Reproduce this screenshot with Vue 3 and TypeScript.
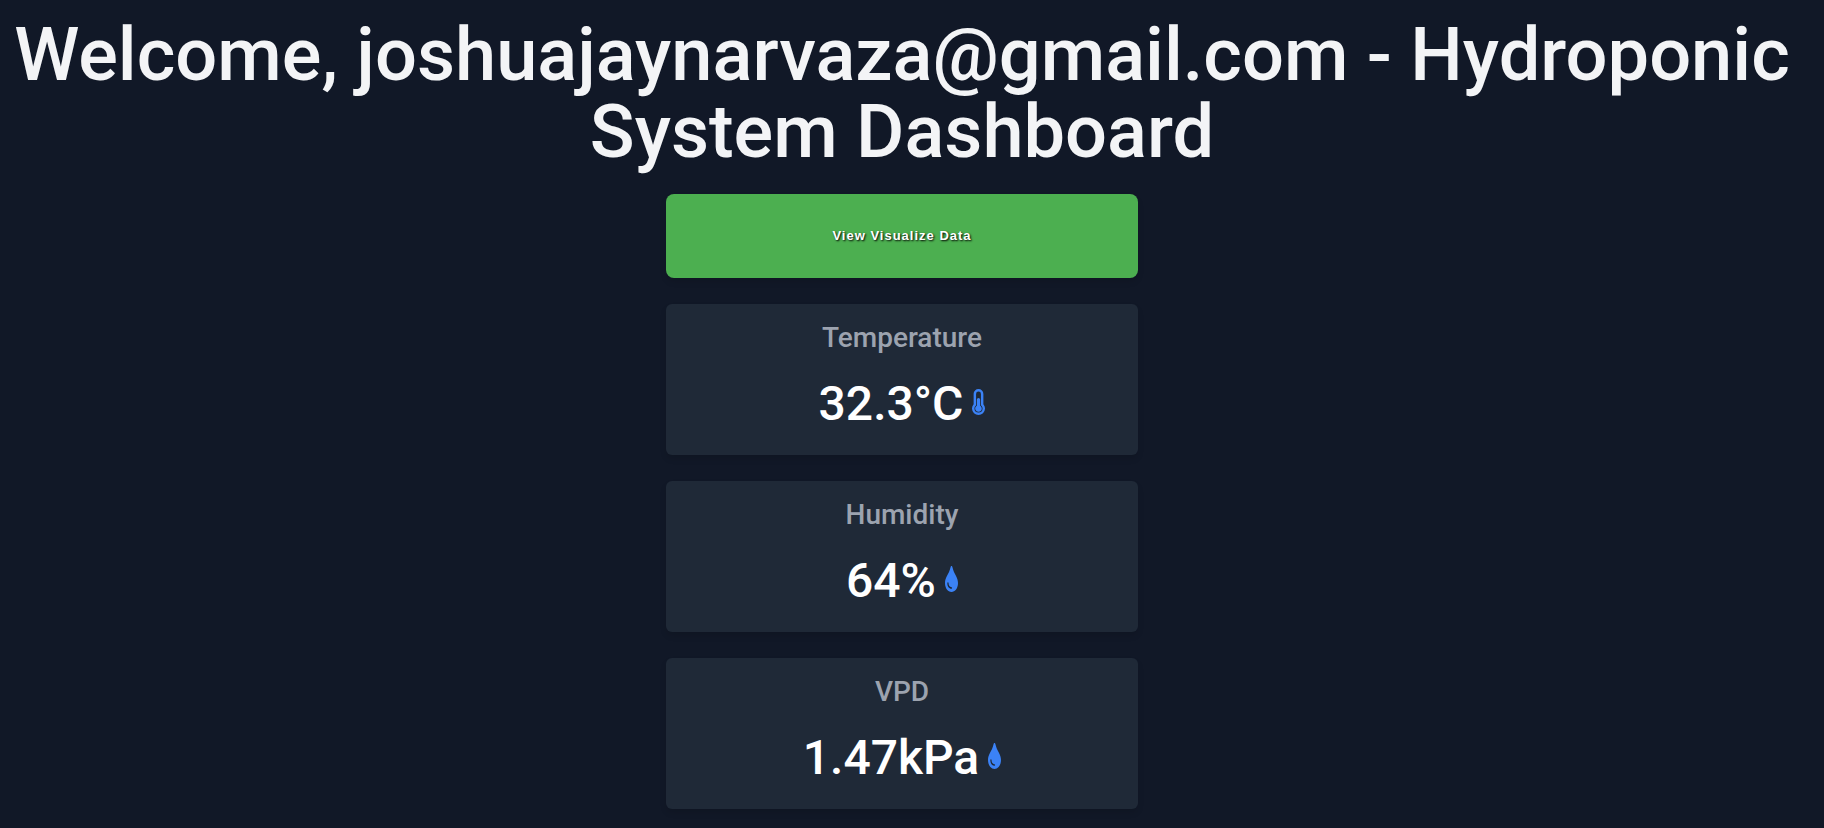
<script setup lang="ts">
interface Reading {
  label: string
  value: string
  icon: 'thermometer' | 'drop'
}

const email = 'joshuajaynarvaza@gmail.com'

const readings: Reading[] = [
  { label: 'Temperature', value: '32.3°C', icon: 'thermometer' },
  { label: 'Humidity', value: '64%', icon: 'drop' },
  { label: 'VPD', value: '1.47kPa', icon: 'drop' },
]
</script>

<template>
  <main class="dashboard">
    <h1 class="title">Welcome, {{ email }} - Hydroponic System Dashboard</h1>
    <div class="stack">
      <button type="button" class="visualize">View Visualize Data</button>
      <section v-for="reading in readings" :key="reading.label" class="card">
        <h2 class="label">{{ reading.label }}</h2>
        <p class="value">
          <span>{{ reading.value }}</span>
          <svg v-if="reading.icon === 'thermometer'" class="icon" viewBox="0 0 256 512" aria-hidden="true">
            <path
              fill-rule="evenodd"
              d="M224 96v203a128 128 0 1 1-192 0V96a96 96 0 0 1 192 0zM176 96a48 48 0 0 0-96 0v222c-20 17-32 39-32 66a80 80 0 0 0 160 0c0-27-12-49-32-66z"
            />
            <path d="M192 384a64 64 0 1 1-96-55V208a32 32 0 0 1 64 0v121c19 11 32 32 32 55z" />
          </svg>
          <svg v-else class="icon" viewBox="0 0 256 512" aria-hidden="true">
            <path
              fill-rule="evenodd"
              d="M128 0c8 0 14 8 20 28 28 130 108 190 108 306 0 102-57 178-128 178S0 436 0 334C0 218 80 158 108 28 114 8 120 0 128 0zM128 448c8 0 12-6 12-15s-4-16-12-17c-34-2-58-34-58-78 0-10-5-17-12-17s-12 7-12 17c0 62 32 108 82 110z"
            />
          </svg>
        </p>
      </section>
    </div>
  </main>
</template>

<style>
body {
  margin: 0;
  background: #111827;
}
</style>

<style scoped>
.dashboard {
  box-sizing: border-box;
  min-height: 100vh;
  padding: 16px 28px 18px 8px;
  background: #111827;
  font-family: Roboto, "Open Sans", sans-serif;
  text-align: center;
}

.title {
  margin: 0 0 24px;
  color: #f3f4f6;
  font-size: 74px;
  font-weight: 500;
  line-height: 77px;
}

.stack {
  display: flex;
  flex-direction: column;
  gap: 26px;
  width: 100%;
  max-width: 472px;
  margin: 0 auto;
}

.visualize {
  padding: 34px 16px;
  border: 0;
  border-radius: 8px;
  background: #4caf50;
  box-shadow: 0 4px 6px rgba(0, 0, 0, 0.1);
  color: #fff;
  font-family: "Liberation Sans", Arial, sans-serif;
  font-size: 13px;
  font-weight: 700;
  line-height: 16px;
  letter-spacing: 1px;
  text-shadow: 1px 1px 2px #000;
  cursor: pointer;
}

.card {
  padding: 17px 16px 20px;
  border-radius: 6px;
  background: #1f2937;
  box-shadow: 0 4px 6px rgba(0, 0, 0, 0.1);
}

.label {
  margin: 0 0 18px;
  color: #9ca3af;
  font-size: 28px;
  font-weight: 500;
  line-height: 34px;
}

.value {
  display: flex;
  align-items: center;
  justify-content: center;
  gap: 9px;
  margin: 0;
  color: #fff;
  font-size: 48px;
  font-weight: 500;
  line-height: 62px;
}

.icon {
  width: 13px;
  height: 26px;
  margin-bottom: 4px;
  fill: #3b82f6;
}
</style>
